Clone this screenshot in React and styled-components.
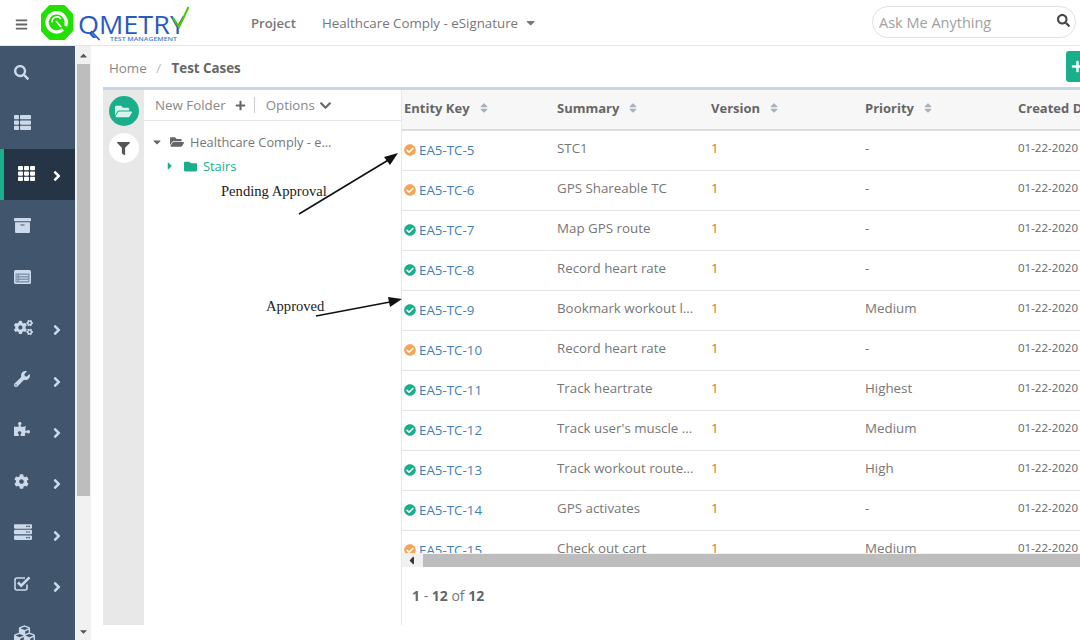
import React from 'react';
import styled, { createGlobalStyle } from 'styled-components';
import {
  FaSearch, FaThList, FaTh, FaArchive, FaCogs, FaWrench, FaPuzzlePiece, FaCog, FaServer,
  FaCubes, FaAngleRight, FaBars, FaCaretDown, FaCaretRight, FaCaretUp, FaCaretLeft, FaFolderOpen,
  FaFolder, FaFilter, FaPlus, FaChevronDown, FaSort, FaCheckCircle,
} from 'react-icons/fa';

const Global = createGlobalStyle`
  html, body { margin: 0; padding: 0; background: #fff; }
  * { box-sizing: border-box; }
  body { font-family: "Open Sans", "Liberation Sans", sans-serif; font-size: 13.33px; color: #777; }
`;

const Page = styled.div`
  position: relative;
  width: 1080px; height: 640px; overflow: hidden;
  display: flex; flex-direction: column; background: #fff;
`;
const Header = styled.header`
  height: 46px; flex: none; display: flex; align-items: center;
  border-bottom: 1px solid #e6e6e6; background: #fff;
`;
const Burger = styled.div`
  width: 41px; flex: none; display: flex; justify-content: center; padding-left: 1px; padding-top: 3px;
  color: #666; font-size: 13px;
`;
const Logo = styled.svg`width: 150px; height: 45px; flex: none;`;
const ProjectLabel = styled.span`
  margin-left: 60px; font-weight: 600; color: #777; font-size: 13.2px;
`;
const ProjectName = styled.span`
  margin-left: 26px; color: #777; font-size: 13.33px; display: flex; align-items: center; gap: 6px;
`;
const SearchBox = styled.div`
  margin-left: auto; margin-right: 4px; width: 204px; height: 32px; margin-top: -1px;
  border: 1px solid #e2e2e2; border-radius: 16px;
  display: flex; align-items: center; justify-content: space-between;
  padding: 0 5px 0 6px; font-size: 14.5px; color: #a0a0a0;
`;
const SearchIcon = styled.span`color: #444; font-size: 13px; display: flex; margin-top: -3px;`;

const Body = styled.div`flex: 1; display: flex; min-height: 0;`;
const Sidebar = styled.nav`
  width: 75px; flex: none; background: #41566c; overflow: hidden;
`;
const NavItem = styled.div`
  height: 51.4px; display: grid; grid-template-columns: 35px 1fr; align-items: center;
  color: #cbd9ea; padding-left: 14px;
  ${p => p.$active && `
    background: #263545; color: #fff; border-left: 4px solid #1aaf8b; padding-left: 14px;
    grid-template-columns: 31px 1fr;
  `}
`;
const NavIcon = styled.span`
  display: flex; font-size: ${p => p.$size}px; margin-top: ${p => p.$dy}px;
`;
const NavArrow = styled.span`display: flex; font-size: 16px; margin-top: 3px;`;
const CardGlyph = styled.svg`width: 17px; height: 14px; display: block;`;
const CheckGlyph = styled.svg`width: 17px; height: 17px; display: block;`;

const PageScroll = styled.div`
  width: 16px; flex: none; background: #f1f1f1; position: relative;
  display: flex; flex-direction: column; align-items: center;
`;
const ScrollArrow = styled.span`
  height: 18px; display: flex; align-items: center; justify-content: center; color: #555; font-size: 11px; flex: none;
  &:last-child { margin-top: auto; }
`;
const ScrollThumb = styled.div`width: 13px; height: 432px; background: #bdbdbd; flex: none;`;

const Main = styled.main`flex: 1; min-width: 0; display: flex; flex-direction: column; padding-left: 12px;`;
const Crumbs = styled.div`
  height: 41px; flex: none; display: flex; align-items: center; position: relative; padding: 2px 0 0 6px; gap: 9.5px;
  font-size: 13.33px; color: #888;
`;
const Sep = styled.span`color: #bbb;`;
const Current = styled.span`font-weight: 700; color: #666; margin-left: 1px;`;
const AddButton = styled.button`
  position: absolute; left: 963px; top: 5px; width: 40px; height: 31px; border: 0; border-radius: 3px;
  background: #1aaf8b; color: #fff; padding: 0 0 0 5px; display: flex; align-items: center; font-size: 13px;
`;
const Panel = styled.section`
  width: 977px; height: 538px; flex: none; display: flex; border-top: 3px solid #c5d7e6;
`;
const Rail = styled.div`
  width: 41px; flex: none; background: #e8e8e8; display: flex; flex-direction: column; align-items: center;
  gap: 7px; padding-top: 6px;
`;
const RailButton = styled.div`
  width: 30px; height: 30px; border-radius: 50%; display: flex; align-items: center; justify-content: center;
  background: ${p => (p.$on ? '#1aaf8b' : '#fff')}; color: ${p => (p.$on ? '#d8f2ee' : '#555')};
  font-size: ${p => (p.$on ? 17 : 13)}px;
`;
const Tree = styled.div`width: 258px; flex: none; border-right: 1px solid #e8e8e8;`;
const TreeBar = styled.div`
  height: 31px; display: flex; align-items: center; padding-left: 11px; border-bottom: 1px solid #e6e6e6;
  color: #888; font-size: 13.33px;
`;
const BarIcon = styled.span`display: flex; color: #666; font-size: ${p => p.$size}px; margin-left: ${p => p.$gap}px;`;
const BarDivider = styled.span`width: 1px; height: 16px; background: #ccc; margin: 0 11px 0 8px;`;
const TreeRow = styled.div`
  display: flex; align-items: center; height: 24px; padding-left: ${p => p.$indent}px;
  color: ${p => (p.$accent ? '#1aaf8b' : '#777')}; font-size: 12.8px;
`;
const TreeToggle = styled.span`width: ${p => p.$w}px; flex: none; display: flex; font-size: 12px; color: ${p => (p.$accent ? '#1aaf8b' : '#666')};`;
const TreeFolder = styled.span`
  width: ${p => p.$w}px; flex: none; display: flex; font-size: ${p => p.$size}px; color: ${p => (p.$accent ? '#1aaf8b' : '#666')};
`;
const TreeList = styled.div`padding-top: 9px;`;

const TableWrap = styled.div`flex: 1; min-width: 0; display: flex; flex-direction: column; position: relative;`;
const TableClip = styled.div`height: 464px; overflow: hidden; flex: none;`;
const columns = '153px 154px 154px 153px 200px';
const HeadRow = styled.div`
  height: 41px; display: grid; grid-template-columns: ${columns}; align-items: center; padding-left: 2px;
  background: #f7f7f7; border-bottom: 2px solid #ddd; color: #666; font-weight: 700; font-size: 13px; white-space: nowrap;
`;
const HeadCell = styled.div`display: flex; align-items: center; gap: 8px; margin-top: -4px;`;
const SortIcon = styled.span`display: flex; color: #a9b2bb; font-size: 12px; margin-top: 1px;`;
const Row = styled.div`
  height: 40px; display: grid; grid-template-columns: ${columns}; align-items: center; padding-left: 2px;
  border-bottom: 1px solid #e4e4e4; white-space: nowrap; color: #777; font-size: 13.33px;
`;
const KeyCell = styled.div`display: flex; align-items: center; gap: 3px; margin-top: -1px; color: #3f7fb8;`;
const Status = styled.span`display: flex; font-size: 12px; color: ${p => (p.$pending ? '#f5a553' : '#1aaf8b')};`;
const Cell = styled.div`margin-top: -5px;`;
const VersionCell = styled.div`margin-top: -5px; color: #c07a30;`;
const DateCell = styled.div`margin-top: -6px; font-size: 11.5px; color: #666;`;
const HScroll = styled.div`
  height: 14px; flex: none; display: flex; align-items: center; background: #f1f1f1; margin-top: -1px; position: relative;
`;
const HArrow = styled.span`width: 21px; flex: none; display: flex; padding-left: 3px; color: #333; font-size: 13px;`;
const HThumb = styled.div`flex: 1; height: 13px; background: #bdbdbd;`;
const Pager = styled.div`padding: 19px 0 0 10px; font-size: 14px; color: #777; b { font-weight: 700; color: #666; }`;

const Note = styled.div`
  position: absolute; left: ${p => p.$x}px; top: ${p => p.$y}px;
  font-family: "Liberation Serif", serif; font-size: 14.6px; color: #222; white-space: nowrap; line-height: 16px;
`;
const ArrowLayer = styled.svg`position: absolute; left: 0; top: 0; pointer-events: none;`;

const CardIcon = () => (
  <CardGlyph viewBox="0 0 17 14">
    <rect width="17" height="14" rx="1.5" fill="#cbd9ea" />
    <rect x="1.5" y="3.5" width="14" height="9" fill="#7f97b0" />
    <path d="M5 5.5h9M5 8h9M5 10.5h9M2.5 5.5h1M2.5 8h1M2.5 10.5h1" stroke="#cbd9ea" strokeWidth="1" />
  </CardGlyph>
);
const CheckIcon = () => (
  <CheckGlyph viewBox="0 0 17 17">
    <path d="M13 9.5V13a2 2 0 0 1-2 2H3a2 2 0 0 1-2-2V5a2 2 0 0 1 2-2h8" fill="none" stroke="#cbd9ea" strokeWidth="1.6" />
    <path d="M4 7.5l3.2 3.2L15.5 2.4" fill="none" stroke="#cbd9ea" strokeWidth="2.6" />
  </CheckGlyph>
);

const nav = [
  { Icon: FaSearch, size: 15, dy: 1 },
  { Icon: FaThList, size: 17, dy: -2 },
  { Icon: FaTh, size: 17, dy: -2, arrow: true, active: true },
  { Icon: FaArchive, size: 17, dy: -1 },
  { Icon: CardIcon, size: 17, dy: -1 },
  { Icon: FaCogs, size: 19, dy: -2, arrow: true },
  { Icon: FaWrench, size: 16, dy: -3, arrow: true },
  { Icon: FaPuzzlePiece, size: 16, dy: -4, arrow: true },
  { Icon: FaCog, size: 15, dy: -3, arrow: true },
  { Icon: FaServer, size: 18, dy: -4, arrow: true },
  { Icon: CheckIcon, size: 17, dy: -5, arrow: true },
  { Icon: FaCubes, size: 21, dy: -4 },
];
const rows = [
  ['EA5-TC-5', 'STC1', '-', 1], ['EA5-TC-6', 'GPS Shareable TC', '-', 1], ['EA5-TC-7', 'Map GPS route', '-', 0],
  ['EA5-TC-8', 'Record heart rate', '-', 0], ['EA5-TC-9', 'Bookmark workout l...', 'Medium', 0],
  ['EA5-TC-10', 'Record heart rate', '-', 1], ['EA5-TC-11', 'Track heartrate', 'Highest', 0],
  ['EA5-TC-12', "Track user's muscle ...", 'Medium', 0], ['EA5-TC-13', 'Track workout route...', 'High', 0],
  ['EA5-TC-14', 'GPS activates', '-', 0], ['EA5-TC-15', 'Check out cart', 'Medium', 1], ['EA5-TC-16', 'Track heartrate', '-', 0],
];
const heads = ['Entity Key', 'Summary', 'Version', 'Priority'];

export default function App() {
  return (
    <Page>
      <Global />
      <Header>
        <Burger><FaBars /></Burger>
        <Logo viewBox="0 0 150 45">
          <polygon points="9,6.5 23,6.5 30.5,14.5 30.5,30.5 23,38.5 9,38.5 1.5,30.5 1.5,14.5" fill="#22e000" stroke="#22e000" strokeWidth="3" strokeLinejoin="round" />
          <path d="M22 29.5 A9.6 9.6 0 1 1 24.5 26" fill="none" stroke="#fff" strokeWidth="3.4" />
          <path d="M11 22.5 A5 5 0 0 1 20 19" fill="none" stroke="#fff" strokeWidth="1.5" />
          <path d="M15 21 L20 27" stroke="#fff" strokeWidth="1.6" />
          <text x="37" y="33.5" fontFamily="'Open Sans', sans-serif" fontWeight="400" fontSize="26" fill="#2a5ac0" textLength="107" lengthAdjust="spacingAndGlyphs">QMETRY</text>
          <path d="M50 31 L58.5 40" stroke="#2a5ac0" strokeWidth="1.8" />
          <path d="M132 18 L138 27 L147.5 7" fill="none" stroke="#3fd000" strokeWidth="2" />
          <text x="69" y="41" fontFamily="'Open Sans', sans-serif" fontWeight="600" fontSize="6" fill="#3f7fd0" textLength="67" lengthAdjust="spacingAndGlyphs">TEST MANAGEMENT</text>
        </Logo>
        <ProjectLabel>Project</ProjectLabel>
        <ProjectName>Healthcare Comply - eSignature <FaCaretDown /></ProjectName>
        <SearchBox>Ask Me Anything<SearchIcon><FaSearch /></SearchIcon></SearchBox>
      </Header>
      <Body>
        <Sidebar>
          {nav.map(({ Icon, size, dy, arrow, active }, i) => (
            <NavItem key={i} $active={active}>
              <NavIcon $size={size} $dy={dy}><Icon /></NavIcon>
              {arrow && <NavArrow><FaAngleRight /></NavArrow>}
            </NavItem>
          ))}
        </Sidebar>
        <PageScroll>
          <ScrollArrow><FaCaretUp /></ScrollArrow>
          <ScrollThumb />
          <ScrollArrow><FaCaretDown /></ScrollArrow>
        </PageScroll>
        <Main>
          <Crumbs>
            Home <Sep>/</Sep> <Current>Test Cases</Current>
            <AddButton aria-label="Add"><FaPlus /></AddButton>
          </Crumbs>
          <Panel>
            <Rail>
              <RailButton $on><FaFolderOpen /></RailButton>
              <RailButton><FaFilter /></RailButton>
            </Rail>
            <Tree>
              <TreeBar>
                New Folder
                <BarIcon $gap={9} $size={11}><FaPlus /></BarIcon>
                <BarDivider />
                Options
                <BarIcon $gap={4} $size={13}><FaChevronDown /></BarIcon>
              </TreeBar>
              <TreeList>
                <TreeRow $indent={7}>
                  <TreeToggle $w={19}><FaCaretDown /></TreeToggle>
                  <TreeFolder $w={20} $size={14}><FaFolderOpen /></TreeFolder>
                  Healthcare Comply - e...
                </TreeRow>
                <TreeRow $indent={20} $accent>
                  <TreeToggle $w={20} $accent><FaCaretRight /></TreeToggle>
                  <TreeFolder $w={19} $size={13} $accent><FaFolder /></TreeFolder>
                  Stairs
                </TreeRow>
              </TreeList>
            </Tree>
            <TableWrap>
              <TableClip>
                <HeadRow>
                  {heads.map(h => <HeadCell key={h}>{h}<SortIcon><FaSort /></SortIcon></HeadCell>)}
                  <HeadCell>Created Date</HeadCell>
                </HeadRow>
                {rows.map(([k, s, p, pending]) => (
                  <Row key={k}>
                    <KeyCell><Status $pending={pending}><FaCheckCircle /></Status>{k}</KeyCell>
                    <Cell>{s}</Cell>
                    <VersionCell>1</VersionCell>
                    <Cell>{p}</Cell>
                    <DateCell>01-22-2020</DateCell>
                  </Row>
                ))}
              </TableClip>
              <HScroll>
                <HArrow><FaCaretLeft /></HArrow>
                <HThumb />
              </HScroll>
              <Pager><b>1</b> - <b>12</b> of <b>12</b></Pager>
            </TableWrap>
          </Panel>
        </Main>
      </Body>
      <Note $x={221} $y={183}>Pending Approval</Note>
      <Note $x={266} $y={298}>Approved</Note>
      <ArrowLayer width="1080" height="640">
        <line x1="299" y1="214" x2="390" y2="159" stroke="#111" strokeWidth="1.6" />
        <polygon points="398,153 384,157 390,165" fill="#111" />
        <line x1="316" y1="316" x2="390" y2="302" stroke="#111" strokeWidth="1.6" />
        <polygon points="402,299 388,297 390,307" fill="#111" />
      </ArrowLayer>
    </Page>
  );
}
